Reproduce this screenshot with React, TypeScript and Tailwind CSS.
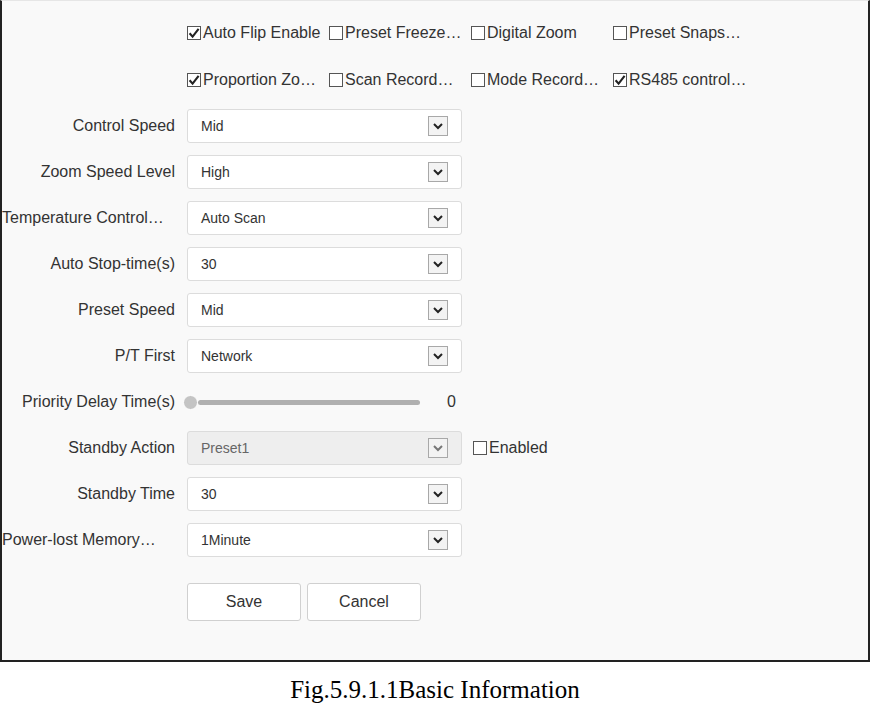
import React from 'react';

const font = { fontFamily: '"Liberation Sans", Arial, sans-serif' };

const checks = [
  [
    { label: 'Auto Flip Enable', on: true },
    { label: 'Preset Freeze…', on: false },
    { label: 'Digital Zoom', on: false },
    { label: 'Preset Snaps…', on: false },
  ],
  [
    { label: 'Proportion Zo…', on: true },
    { label: 'Scan Record…', on: false },
    { label: 'Mode Record…', on: false },
    { label: 'RS485 control…', on: true },
  ],
];

function Box({ on }: { on: boolean }) {
  return (
    <span className="w-[14px] h-[14px] shrink-0 border border-[#555] bg-white flex items-center justify-center">
      {on && (
        <svg viewBox="0 0 12 12" className="w-[12px] h-[12px]">
          <path d="M1.6 6.2 L4.6 9.6 L10.6 1.8" fill="none" stroke="#222" strokeWidth="2.1" />
        </svg>
      )}
    </span>
  );
}

function Select({ value, disabled }: { value: string; disabled?: boolean }) {
  return (
    <div
      className={`w-[275px] h-[34px] rounded-[3px] border border-[#dcdcdc] flex items-center justify-between pl-[13px] pr-[13px] text-[14px] ${
        disabled ? 'bg-[#eeeeee] text-[#666]' : 'bg-white text-[#333]'
      }`}
    >
      <span>{value}</span>
      <span className="w-[20px] h-[20px] border border-[#a8a8a8] bg-[#f3f3f3] flex items-center justify-center">
        <svg viewBox="0 0 12 12" className="w-[12px] h-[12px]">
          <path d="M2 4 L6 8 L10 4" fill="none" stroke={disabled ? '#777' : '#222'} strokeWidth="2" />
        </svg>
      </span>
    </div>
  );
}

function Row({ label, left, children }: { label: string; left?: boolean; children: React.ReactNode }) {
  return (
    <div className="h-[46px] flex items-center">
      <div className={`w-[173px] whitespace-nowrap text-[16px] text-[#333] ${left ? 'text-left' : 'text-right'}`}>
        {label}
      </div>
      <div className="ml-[12px] flex items-center">{children}</div>
    </div>
  );
}

export default function App() {
  const selects = [
    ['Control Speed', 'Mid'],
    ['Zoom Speed Level', 'High'],
    ['Temperature Control…', 'Auto Scan'],
    ['Auto Stop-time(s)', '30'],
    ['Preset Speed', 'Mid'],
    ['P/T First', 'Network'],
  ];

  return (
    <div className="bg-white w-[870px] h-[704px]" style={font}>
      <div className="h-[662px] border-l-2 border-r-2 border-b-2 border-t border-l-[#222] border-r-[#222] border-b-[#222] border-t-[#e6e6e6] bg-[#f9f9f9] pt-[8px] flex flex-col">
        {checks.map((row, i) => (
          <div key={i} className="h-[47px] flex items-center pl-[185px]">
            {row.map(c => (
              <div key={c.label} className="w-[142px] flex items-center text-[16px] text-[#333]">
                <Box on={c.on} />
                <span className="ml-[2px] whitespace-nowrap">{c.label}</span>
              </div>
            ))}
          </div>
        ))}

        {selects.map(([l, v]) => (
          <Row key={l} label={l} left={l.startsWith('Temperature')}>
            <Select value={v} />
          </Row>
        ))}

        <Row label="Priority Delay Time(s)">
          <div className="w-[275px] flex items-center">
            <span className="w-[15px] h-[15px] rounded-full bg-[#c4c4c4] -ml-[4px] border border-white" />
            <span className="w-[222px] h-[5px] rounded-full bg-[#b0b0b0]" />
            <span className="ml-[27px] text-[16px] text-[#333]">0</span>
          </div>
        </Row>

        <Row label="Standby Action">
          <Select value="Preset1" disabled />
          <div className="ml-[11px] flex items-center text-[16px] text-[#333]">
            <Box on={false} />
            <span className="ml-[2px]">Enabled</span>
          </div>
        </Row>

        <Row label="Standby Time">
          <Select value="30" />
        </Row>

        <Row label="Power-lost Memory…" left>
          <Select value="1Minute" />
        </Row>

        <div className="mt-[20px] ml-[185px] flex gap-[6px]">
          <button className="w-[114px] h-[38px] bg-white border border-[#d0d0d0] rounded-[3px] text-[16px] text-[#333]">
            Save
          </button>
          <button className="w-[114px] h-[38px] bg-white border border-[#d0d0d0] rounded-[3px] text-[16px] text-[#333]">
            Cancel
          </button>
        </div>
      </div>

      <div
        className="text-center text-[25px] leading-[30px] text-black pt-[13px]"
        style={{ fontFamily: '"Liberation Serif", "Times New Roman", serif' }}
      >
        Fig.5.9.1.1Basic Information
      </div>
    </div>
  );
}
